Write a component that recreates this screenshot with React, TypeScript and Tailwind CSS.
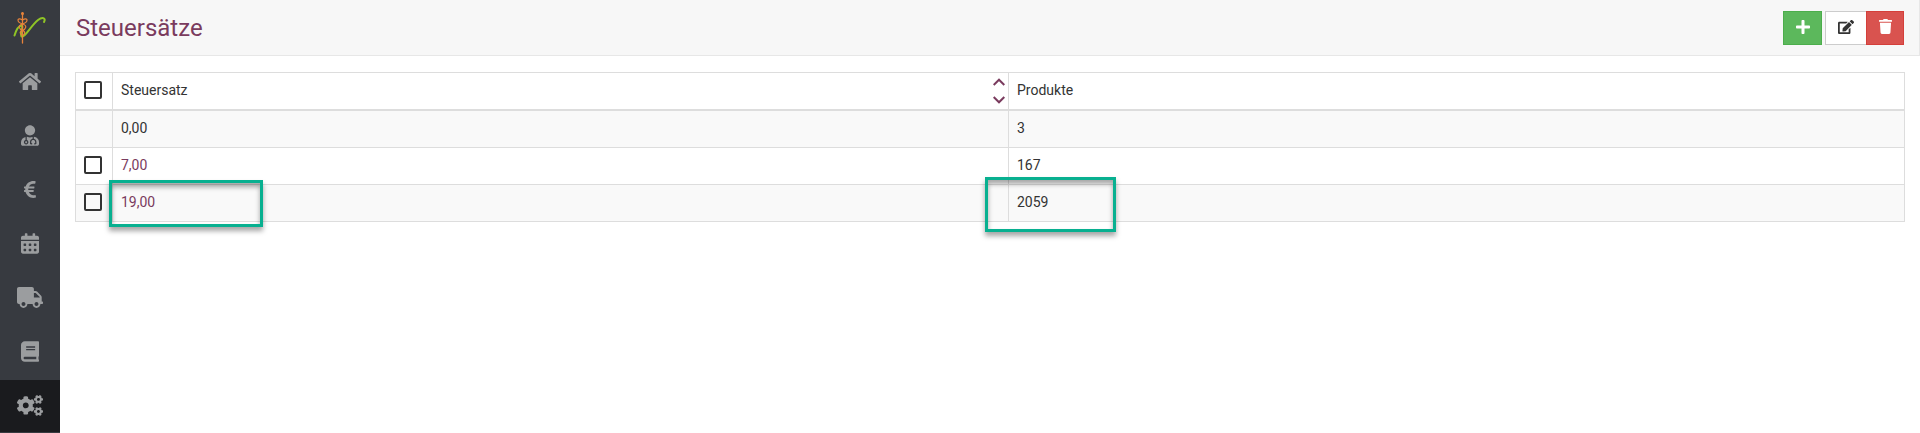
import React from 'react';
import { FaHome, FaUserMd, FaEuroSign, FaCalendarAlt, FaTruck, FaBook, FaCogs, FaPlus, FaEdit, FaTrash } from 'react-icons/fa';

const navItems = [
  { Icon: FaHome, size: 'w-[22px]' },
  { Icon: FaUserMd, size: 'w-[18px]' },
  { Icon: FaEuroSign, size: 'w-[12px]' },
  { Icon: FaCalendarAlt, size: 'w-[18px]' },
  { Icon: FaTruck, size: 'w-[26px]' },
  { Icon: FaBook, size: 'w-[18px]' },
  { Icon: FaCogs, size: 'w-[26px]' },
];

const rows = [
  { rate: '0,00', count: '3', selectable: false, marked: false },
  { rate: '7,00', count: '167', selectable: true, marked: false },
  { rate: '19,00', count: '2059', selectable: true, marked: true },
];

function Logo() {
  return (
    <svg width="34" height="34" viewBox="0 0 34 34" fill="none" strokeLinecap="round">
      <path d="M1.500 24.500C3 19.500 5.500 15 8.500 14.500C11 14.500 6.500 24 8.500 25.500C12 27 18 14.500 25 9C29 6 33.500 6.500 31 11" stroke="#8fc426" strokeWidth="2" />
      <path d="M9.500 2V32" stroke="#e8833a" strokeWidth="1.300" />
      <circle cx="9.500" cy="2.500" r="1.500" fill="#e8833a" />
      <path d="M9.500 9C4 5.500 3 11 9.500 13C15 14.500 12.500 18.500 9.500 19.500C6 20.500 7 23.500 9.500 24.500M9.500 9C15 5.500 16 11 9.500 13C4 14.500 6.500 18.500 9.500 19.500C13 20.500 12 23.500 9.500 24.500" stroke="#e8833a" strokeWidth="1.200" />
    </svg>
  );
}

function Checkbox() {
  return <span className="block h-[18px] w-[18px] shrink-0 rounded-[2px] border-2 border-[#333333]" />;
}

const columns = 'grid grid-cols-[37px_896px_1fr] border-x border-[#dddddd]';
const checkCell = 'flex items-center border-r border-[#dddddd] pl-2';

export default function App() {
  return (
    <div className="flex h-[433px] w-full overflow-hidden bg-white text-[14px] text-[#333333] [font-family:Roboto,sans-serif]">
      <nav className="flex w-[60px] shrink-0 flex-col gap-[2px] bg-[#373a40]">
        <div className="flex h-[54px] shrink-0 items-center justify-center pt-px"><Logo /></div>
        {navItems.map(({ Icon, size }, i) => (
          <div key={i} className={`flex h-[52px] shrink-0 items-center justify-center pb-px text-[#9b9d9f] ${i === 6 ? 'bg-[#1a1b1e]' : ''}`}>
            <Icon className={`h-[21px] shrink-0 ${size}`} />
          </div>
        ))}
      </nav>
      <main className="flex min-w-0 flex-1 flex-col">
        <header className="flex h-14 shrink-0 items-center justify-between border-r border-b border-[#e7e7e7] bg-[#f7f7f7] pr-[15px] pl-4">
          <h1 className="text-[24px] leading-6 text-[#7a3b5e]">Steuersätze</h1>
          <div className="flex">
            <button className="mr-[3px] flex h-[34px] w-[39px] items-center justify-center border border-[#4cae4c] bg-[#5cb85c] pb-[2px] text-white"><FaPlus className="h-4 w-[14px]" /></button>
            <button className="flex h-[34px] w-[41px] items-center justify-center border border-r-0 border-[#cccccc] bg-white pb-[2px]"><FaEdit className="h-4 w-4" /></button>
            <button className="flex h-[34px] w-[38px] items-center justify-center border border-[#d43f3a] bg-[#d9534f] pb-[2px] text-white"><FaTrash className="h-[15px] w-[13px]" /></button>
          </div>
        </header>
        <div className="pt-4 pr-[15px] pl-[15px]">
          <div className={`${columns} h-[39px] border-t border-b-2`}>
            <div className={`${checkCell} pb-[2px]`}><Checkbox /></div>
            <div className="flex items-center justify-between border-r border-[#dddddd] pr-[3px] pb-[2px] pl-2">
              <span>Steuersatz</span>
              <svg width="12" height="28" viewBox="0 0 12 28" fill="none" stroke="#7a3b5e" strokeWidth="2">
                <path d="M0.700 9L6 3.700L11.300 9M0.700 21L6 26.300L11.300 21" />
              </svg>
            </div>
            <div className="flex items-center pb-[2px] pl-2">Produkte</div>
          </div>
          {rows.map((row, i) => (
            <div key={row.rate} className={`${columns} h-[37px] border-b ${i % 2 === 0 ? 'bg-[#f9f9f9]' : 'bg-white'}`}>
              <div className={`${checkCell} pb-[2px]`}>{row.selectable && <Checkbox />}</div>
              <div className={`relative flex items-center border-r border-[#dddddd] pb-[2px] pl-2 ${row.selectable ? 'text-[#7a3b5e]' : ''}`}>
                {row.rate}
                {row.marked && <span className="absolute top-[-5px] left-[-4px] h-[47px] w-[154px] border-3 border-[#08b090] shadow-[0_4px_5px_rgba(0,0,0,0.35),inset_0_4px_5px_rgba(0,0,0,0.35)]" />}
              </div>
              <div className="relative flex items-center pb-[2px] pl-2">
                {row.count}
                {row.marked && <span className="absolute top-[-8px] left-[-24px] h-[55px] w-[131px] border-3 border-[#08b090] shadow-[0_4px_5px_rgba(0,0,0,0.35),inset_0_4px_5px_rgba(0,0,0,0.35)]" />}
              </div>
            </div>
          ))}
        </div>
      </main>
    </div>
  );
}
